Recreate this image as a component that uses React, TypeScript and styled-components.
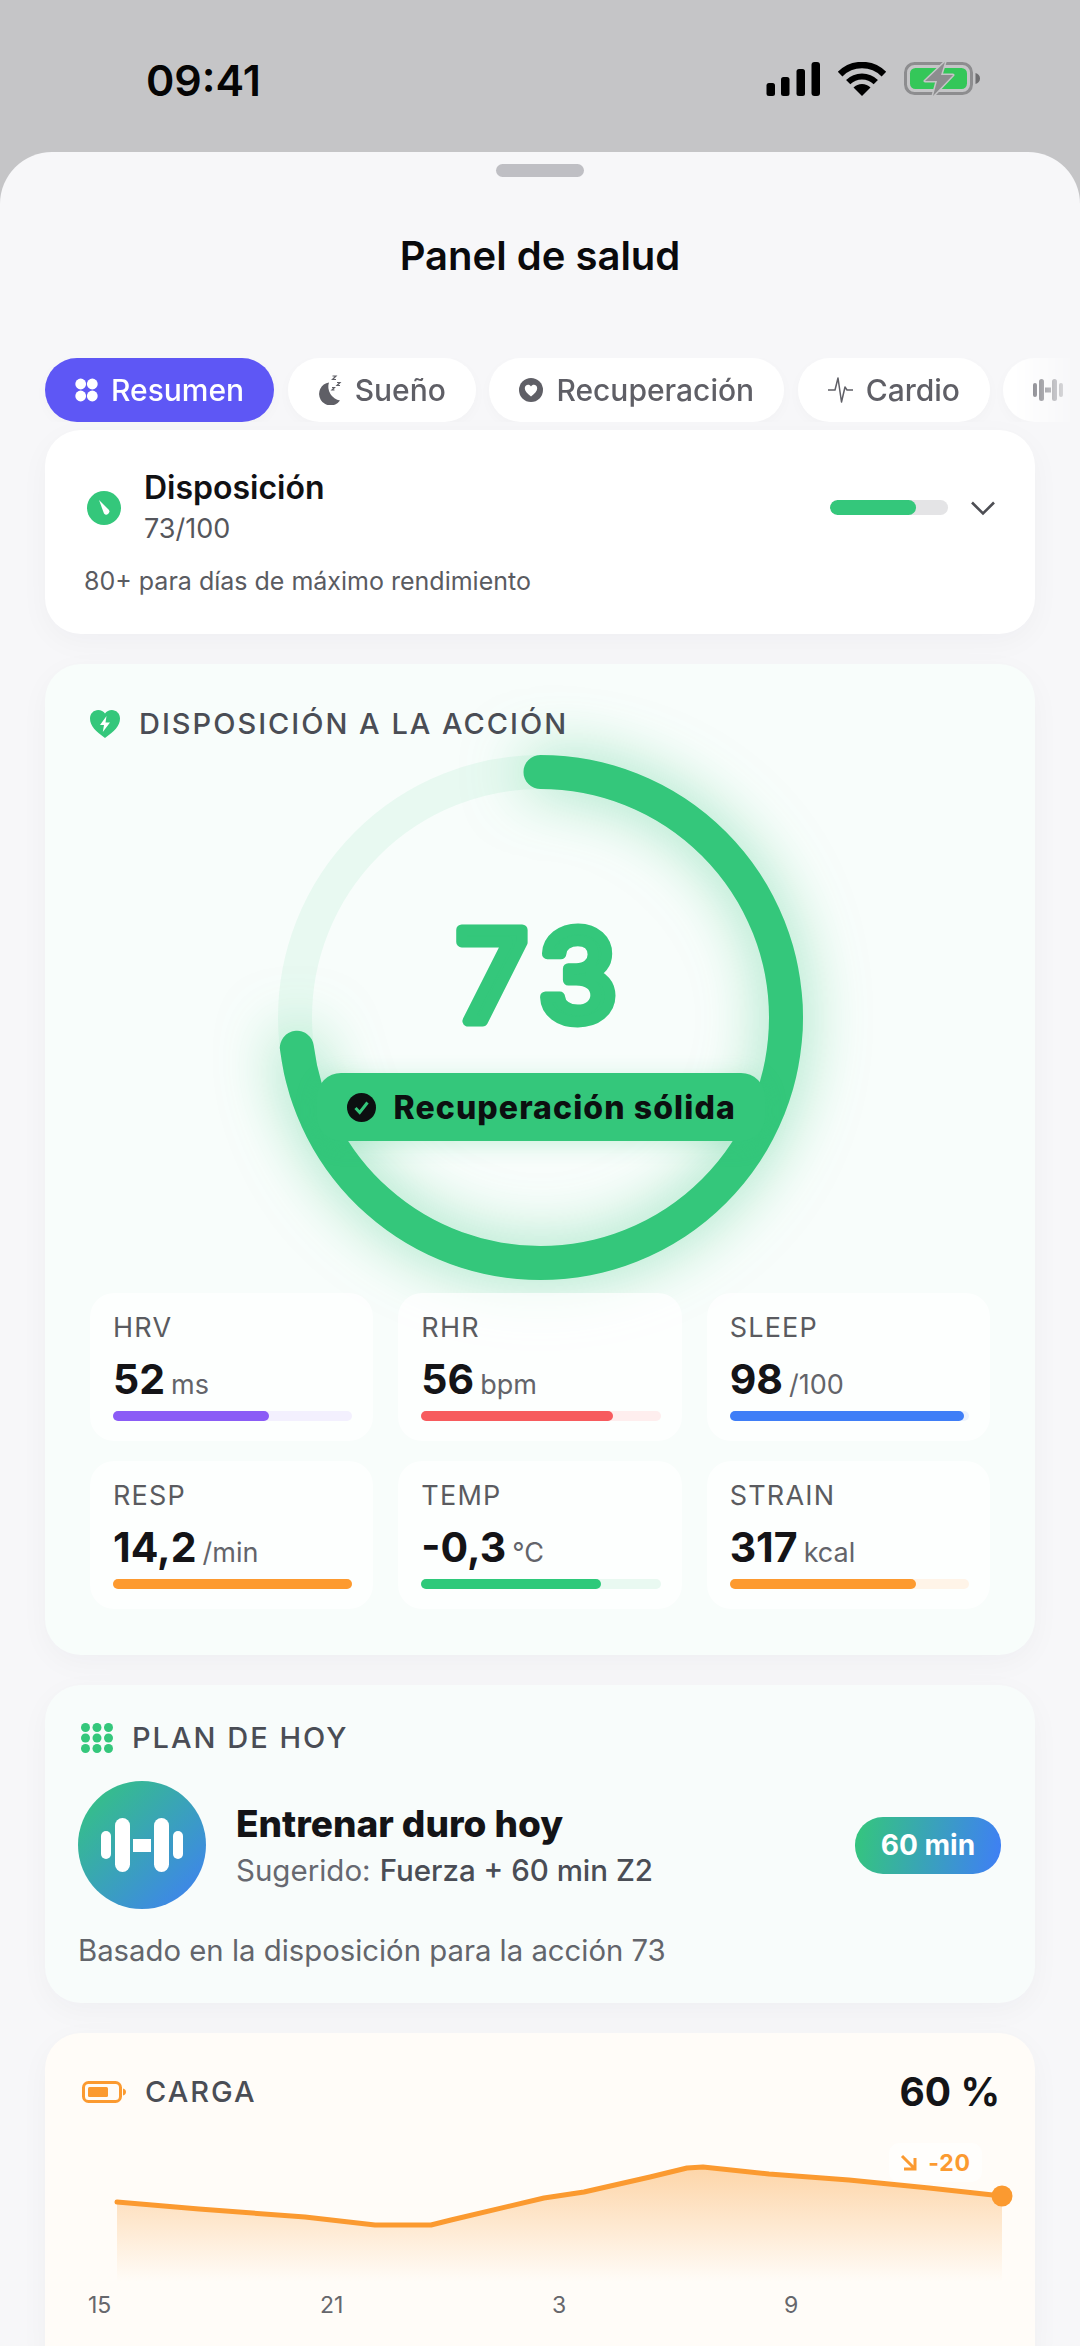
import React from "react";
import styled, { createGlobalStyle } from "styled-components";

const Global = createGlobalStyle`
  html, body { margin: 0; padding: 0; background: #c5c5c7; }
  * { box-sizing: border-box; }
  body { font-family: "Inter", "Liberation Sans", sans-serif; }
`;

const Screen = styled.div`
  width: 1080px;
  height: 2346px;
  overflow: hidden;
  background: #c5c5c7;
`;
const StatusBar = styled.div`
  height: 152px;
  display: flex;
  align-items: flex-start;
  justify-content: space-between;
  padding: 62px 100px 0 146px;
`;
const Time = styled.div`
  font-size: 43px;
  font-weight: 600;
  line-height: 36px;
  color: #050505;
`;
const Sheet = styled.div`
  height: 2194px;
  overflow: hidden;
  background: #f7f7f9;
  border-radius: 52px 52px 0 0;
  padding-top: 12px;
`;
const Grabber = styled.div`
  width: 88px;
  height: 13px;
  border-radius: 7px;
  background: #bfbfc4;
  margin: 0 auto;
`;
const Title = styled.h1`
  margin: 54px 0 0;
  text-align: center;
  font-size: 40px;
  line-height: 50px;
  font-weight: 600;
  color: #0a0a0c;
`;
const Tabs = styled.div`
  margin-top: 77px;
  display: flex;
  gap: 13.5px;
  padding-left: 45px;
  overflow: hidden;
  mask-image: linear-gradient(to right, #000 1010px, transparent 1078px);
`;
const Tab = styled.div<{ $active?: boolean }>`
  flex: none;
  height: 64px;
  padding: 0 30px;
  border-radius: 32px;
  display: flex;
  align-items: center;
  gap: 13px;
  font-size: 30px;
  font-weight: 500;
  background: ${(p) => (p.$active ? "#5e57f5" : "#ffffff")};
  color: ${(p) => (p.$active ? "#ffffff" : "#5f5f66")};
  box-shadow: 0 4px 14px rgba(30, 30, 60, 0.025);
`;
const Stack = styled.div`
  margin-top: 8px;
  padding: 0 45px;
  display: flex;
  flex-direction: column;
  gap: 30px;
`;
const Card = styled.section<{ $bg?: string }>`
  border-radius: 36px;
  background: ${(p) => p.$bg || "#ffffff"};
  box-shadow: 0 8px 30px rgba(30, 30, 60, 0.035);
`;
const ReadyCard = styled(Card)`
  padding: 38px 39px 37px;
`;
const ReadyRow = styled.div`
  display: flex;
  align-items: center;
  justify-content: space-between;
`;
const ReadyLeft = styled.div`
  display: flex;
  align-items: center;
  gap: 23px;
  padding-left: 3px;
`;
const ReadyTitle = styled.div`
  font-size: 32px;
  line-height: 40px;
  font-weight: 600;
  color: #111114;
`;
const ReadySub = styled.div`
  margin-top: 3px;
  font-size: 27px;
  line-height: 36px;
  color: #55565c;
`;
const ReadyRight = styled.div`
  display: flex;
  align-items: center;
  gap: 22px;
`;
const MiniTrack = styled.div`
  width: 118px;
  height: 15px;
  border-radius: 8px;
  background: #e4e4e6;
  overflow: hidden;
`;
const MiniFill = styled.div`
  height: 100%;
  border-radius: 8px;
  background: #34c77b;
`;
const Note = styled.div`
  margin-top: 18px;
  font-size: 25px;
  line-height: 32px;
  color: #5a5b61;
`;
const GaugeCard = styled(Card)`
  padding: 43px 45px 46px;
`;
const Head = styled.div<{ $gap?: number }>`
  display: flex;
  align-items: center;
  gap: ${(p) => p.$gap ?? 19}px;
  position: relative;
  z-index: 1;
`;
const HeadLabel = styled.div`
  font-size: 29px;
  line-height: 34px;
  font-weight: 500;
  letter-spacing: 2px;
  color: #4a4d55;
`;
const Gauge = styled.div`
  position: relative;
  width: 525px;
  height: 525px;
  margin: 14px auto 0;
  display: grid;
`;
const GaugeSvg = styled.svg`
  display: block;
  margin: -60px;
  overflow: visible;
`;
const Arc = styled.circle`
  filter: drop-shadow(0 0 30px rgba(52, 199, 123, 0.55));
`;
const GaugeNumber = styled.text`
  font-family: "Inter", sans-serif;
  font-size: 125px;
  font-weight: 500;
  letter-spacing: 13px;
  fill: #34c77b;
  stroke: #34c77b;
  stroke-width: 11px;
  stroke-linejoin: round;
  stroke-linecap: round;
  text-anchor: middle;
`;
const GaugePill = styled.div`
  position: absolute;
  left: 39px;
  top: 318px;
  width: 448px;
  height: 68px;
  border-radius: 24px;
  background: #34c77b;
  box-shadow: 0 4px 22px rgba(52, 199, 123, 0.22);
  display: flex;
  align-items: center;
  gap: 18px;
  padding-left: 30px;
  font-size: 32px;
  font-weight: 800;
  letter-spacing: 1.1px;
  color: #0c0f10;
`;
const Metrics = styled.div`
  margin-top: 13px;
  display: grid;
  grid-template-columns: repeat(3, 1fr);
  column-gap: 25px;
  row-gap: 20px;
  position: relative;
`;
const Metric = styled.div`
  height: 148px;
  border-radius: 24px;
  background: rgba(255, 255, 255, 0.72);
  padding: 20px 21px 0 23px;
`;
const MetricLabel = styled.div`
  font-size: 27px;
  line-height: 30px;
  letter-spacing: 1.2px;
  color: #5a5b60;
`;
const MetricValue = styled.div`
  margin-top: 14px;
  height: 44px;
  line-height: 44px;
  font-size: 41px;
  font-weight: 700;
  color: #141417;
  display: flex;
  align-items: baseline;
  gap: 6px;
`;
const MetricUnit = styled.span`
  font-size: 27px;
  font-weight: 400;
  color: #63646a;
`;
const BarTrack = styled.div<{ $tint: string }>`
  margin-top: 10px;
  height: 10px;
  border-radius: 5px;
  background: ${(p) => p.$tint};
`;
const BarFill = styled.div<{ $color: string }>`
  height: 100%;
  border-radius: 5px;
  background: ${(p) => p.$color};
`;
const PlanCard = styled(Card)`
  padding: 36px 34px 34px 33px;
`;
const PlanHead = styled(Head)`
  padding-left: 3px;
`;
const PlanRow = styled.div`
  margin-top: 26px;
  display: flex;
  align-items: center;
  gap: 30px;
`;
const Avatar = styled.div`
  width: 128px;
  height: 128px;
  border-radius: 50%;
  flex: none;
  background: linear-gradient(135deg, #34c77b, #3f7ef7);
  display: flex;
  align-items: center;
  justify-content: center;
`;
const PlanText = styled.div`
  flex: 1;
`;
const PlanTitle = styled.div`
  font-size: 37px;
  line-height: 44px;
  font-weight: 800;
  color: #141417;
`;
const PlanSub = styled.div`
  margin-top: 6px;
  font-size: 29.500px;
  line-height: 36px;
  color: #666870;
  display: flex;
  gap: 9px;
`;
const PlanStrong = styled.span`
  font-weight: 500;
  color: #4a4d55;
`;
const DurationBadge = styled.div`
  height: 57px;
  width: 146px;
  border-radius: 28px;
  background: linear-gradient(100deg, #34c77b, #3f7ef7);
  color: #ffffff;
  font-size: 28px;
  font-weight: 700;
  display: flex;
  align-items: center;
  justify-content: center;
`;
const PlanFoot = styled.div`
  margin-top: 24px;
  font-size: 29.300px;
  line-height: 36px;
  color: #63656b;
`;
const LoadCard = styled(Card)`
  padding: 40px 35px 60px 37px;
`;
const LoadHead = styled.div`
  display: flex;
  align-items: center;
  justify-content: space-between;
`;
const LoadValue = styled.div`
  font-size: 39px;
  line-height: 38px;
  font-weight: 700;
  color: #141417;
`;
const Chart = styled.div`
  position: relative;
  margin-top: 19px;
  height: 155px;
`;
const ChartSvg = styled.svg`
  display: block;
  overflow: visible;
`;
const Delta = styled.div`
  position: absolute;
  left: 807px;
  top: 13px;
  width: 93px;
  height: 39px;
  border-radius: 10px;
  background: rgba(255, 255, 255, 0.6);
  display: flex;
  align-items: center;
  justify-content: center;
  gap: 11px;
  font-size: 23px;
  font-weight: 700;
  letter-spacing: 0.8px;
  color: #fb9a30;
`;
const Axis = styled.div`
  margin-top: 5px;
  padding-left: 6px;
  display: grid;
  grid-template-columns: repeat(4, 232px);
  font-size: 23px;
  line-height: 30px;
  color: #66676c;
`;

const StatusIcons = () => (
  <svg width="214" height="36" viewBox="0 0 214 36" aria-hidden="true">
    <rect x="0.5" y="21" width="8.5" height="13" rx="2.5" fill="#000" />
    <rect x="15" y="15" width="8.5" height="19" rx="2.5" fill="#000" />
    <rect x="30.5" y="7" width="8.5" height="27" rx="2.5" fill="#000" />
    <rect x="45.5" y="0" width="8.5" height="34" rx="3" fill="#000" />
    <path d="M74.1 12.1A31 31 0 0 1 117.9 12.1" fill="none" stroke="#000" strokeWidth="6.5" />
    <path d="M82.2 20.2A19.5 19.5 0 0 1 109.8 20.2" fill="none" stroke="#000" strokeWidth="6" />
    <path d="M96 34L87.5 25.5A12 12 0 0 1 104.5 25.5Z" fill="#000" />
    <rect x="139.5" y="1.5" width="66" height="30" rx="9" fill="none" stroke="#8d8d8f" strokeWidth="3" />
    <rect x="144" y="6" width="57" height="21" rx="5.5" fill="#34c759" />
    <path d="M209.5 11c2.6.5 4.5 2.8 4.5 5.5s-1.900 5-4.500 5.500z" fill="#6f6f71" />
    <path
      d="M179 0L159 19H171L167 34L187 13H175Z"
      fill="#8d8d8f"
      stroke="#c5c5c7"
      strokeWidth="3"
      paintOrder="stroke"
      strokeLinejoin="round"
    />
  </svg>
);

const DotsIcon = () => (
  <svg width="23" height="24" viewBox="0 0 23 24" fill="#fff" aria-hidden="true">
    <circle cx="5.700" cy="6" r="5.400" />
    <circle cx="17.300" cy="6" r="5.400" />
    <circle cx="5.700" cy="18" r="5.400" />
    <circle cx="17.300" cy="18" r="5.400" />
  </svg>
);
const MoonIcon = () => (
  <svg width="24" height="30" viewBox="0 0 24 30" aria-hidden="true">
    <path d="M11 7.500A11.500 11.500 0 1 0 22 25.500 14 14 0 0 1 11 7.500Z" fill="#5f5f66" />
    <path d="M14.500 1h3.500l-3.500 3.500h3.500M19 7.500h3l-3 3h3M14 12.500h2.500l-2.500 2.500h2.500" fill="none" stroke="#5f5f66" strokeWidth="1.200" />
  </svg>
);
const HeartBadgeIcon = () => (
  <svg width="24" height="24" viewBox="0 0 24 24" aria-hidden="true">
    <circle cx="12" cy="12" r="12" fill="#5f5f66" />
    <path d="M12 18.500C8 15.500 5.800 13.200 5.800 10.300 5.800 8.200 7.300 6.800 9.100 6.800c1.200 0 2.300.6 2.900 1.700.6-1.100 1.700-1.700 2.900-1.700 1.800 0 3.300 1.400 3.300 3.500 0 2.900-2.200 5.200-6.200 8.200Z" fill="#fff" />
  </svg>
);
const PulseIcon = () => (
  <svg width="25" height="30" viewBox="0 0 25 30" aria-hidden="true">
    <path d="M0 15H7L10 3L13.500 27L17 12L19 15H25" fill="none" stroke="#5f5f66" strokeWidth="1.500" strokeLinejoin="round" />
  </svg>
);
const SmallDumbbell = () => (
  <svg width="30" height="22" viewBox="0 0 30 22" fill="#5f5f66" aria-hidden="true">
    <rect x="0" y="4" width="4" height="14" rx="2" />
    <rect x="6" y="0" width="5" height="22" rx="2.500" />
    <rect x="12" y="8.500" width="6" height="5" />
    <rect x="19" y="0" width="5" height="22" rx="2.500" />
    <rect x="26" y="4" width="4" height="14" rx="2" />
  </svg>
);
const GaugeBadgeIcon = () => (
  <svg width="34" height="34" viewBox="0 0 34 34" aria-hidden="true">
    <circle cx="17" cy="17" r="17" fill="#34c77b" />
    <path d="M12 9L21.500 18.500A3 3 0 0 1 17 22.500Z" fill="#fff" />
  </svg>
);
const Chevron = () => (
  <svg width="26" height="16" viewBox="0 0 26 16" aria-hidden="true">
    <path d="M2 2.500L13 13.500L24 2.500" fill="none" stroke="#4d4e54" strokeWidth="2.600" />
  </svg>
);
const HeartBolt = () => (
  <svg width="30" height="28" viewBox="0 0 30 28" aria-hidden="true">
    <path d="M15 28C6 21.500 0 16 0 8.500 0 3.500 3.800 0 8.200 0c2.800 0 5.300 1.300 6.800 3.500C16.500 1.300 19 0 21.800 0 26.200 0 30 3.500 30 8.500 30 16 24 21.500 15 28Z" fill="#34c77b" />
    <path d="M16.500 6L10 15H14L12.800 22L20 12.500H15.500Z" fill="#fff" />
  </svg>
);
const GridDots = () => (
  <svg width="32" height="30" viewBox="0 0 32 30" fill="#34c77b" aria-hidden="true">
    {[4.500, 16, 27.500].map((x) =>
      [4.500, 15, 25.500].map((y) => <circle key={`${x}-${y}`} cx={x} cy={y} r="4.500" />)
    )}
  </svg>
);
const Dumbbell = () => (
  <svg width="82" height="54" viewBox="0 0 82 54" fill="#fff" aria-hidden="true">
    <rect x="0" y="13" width="10" height="28" rx="5" />
    <rect x="14" y="0" width="15" height="54" rx="7.500" />
    <rect x="32" y="21" width="18" height="13" />
    <rect x="53" y="0" width="15" height="54" rx="7.500" />
    <rect x="72" y="13" width="10" height="28" rx="5" />
  </svg>
);
const BatteryIcon = () => (
  <svg width="44" height="22" viewBox="0 0 44 22" aria-hidden="true">
    <rect x="1.500" y="1.500" width="37" height="19" rx="5" fill="none" stroke="#fb9a30" strokeWidth="3" />
    <rect x="6" y="6" width="20" height="10" rx="1.500" fill="#fb9a30" />
    <path d="M41 7.500c1.800.4 3 1.800 3 3.500s-1.200 3.100-3 3.500z" fill="#fb9a30" />
  </svg>
);
const CheckBadge = () => (
  <svg width="29" height="29" viewBox="0 0 29 29" aria-hidden="true">
    <circle cx="14.500" cy="14.500" r="14.500" fill="#0c0f10" />
    <path d="M8.500 15L12.700 19.500L20.500 9.500" fill="none" stroke="#34c77b" strokeWidth="3" />
  </svg>
);
const DownArrow = () => (
  <svg width="17" height="17" viewBox="0 0 17 17" aria-hidden="true">
    <path d="M2 2L14 14M15 4V15H4" fill="none" stroke="#fb9a30" strokeWidth="3" />
  </svg>
);

type MetricData = {
  label: string;
  value: string;
  unit: string;
  pct: number;
  color: string;
  tint: string;
};
const metrics: MetricData[] = [
  { label: "HRV", value: "52", unit: "ms", pct: 65, color: "#8b5cf6", tint: "#f3f0fe" },
  { label: "RHR", value: "56", unit: "bpm", pct: 80, color: "#f75b5e", tint: "#feeeee" },
  { label: "SLEEP", value: "98", unit: "/100", pct: 98, color: "#3f7ef7", tint: "#edf3fe" },
  { label: "RESP", value: "14,2", unit: "/min", pct: 100, color: "#fd9a2f", tint: "#fff3e6" },
  { label: "TEMP", value: "-0,3", unit: "°C", pct: 75, color: "#2ec97a", tint: "#e9f9f1" },
  { label: "STRAIN", value: "317", unit: "kcal", pct: 78, color: "#fd9a2f", tint: "#fff4e8" },
];

const R = 245.5;
const C = 2 * Math.PI * R;
const linePts =
  "35,72 117,79 223,87 293,95 349,95 369,90 462,68 502,62 568,47 605,38 621,37 687,44 767,50 807,54 847,58 920,66";

export default function App() {
  return (
    <Screen>
      <Global />
      <StatusBar>
        <Time>09:41</Time>
        <StatusIcons />
      </StatusBar>
      <Sheet>
        <Grabber />
        <Title>Panel de salud</Title>
        <Tabs>
          <Tab $active>
            <DotsIcon />
            Resumen
          </Tab>
          <Tab>
            <MoonIcon />
            Sueño
          </Tab>
          <Tab>
            <HeartBadgeIcon />
            Recuperación
          </Tab>
          <Tab>
            <PulseIcon />
            Cardio
          </Tab>
          <Tab>
            <SmallDumbbell />
            Fuerza
          </Tab>
        </Tabs>
        <Stack>
          <ReadyCard>
            <ReadyRow>
              <ReadyLeft>
                <GaugeBadgeIcon />
                <div>
                  <ReadyTitle>Disposición</ReadyTitle>
                  <ReadySub>73/100</ReadySub>
                </div>
              </ReadyLeft>
              <ReadyRight>
                <MiniTrack>
                  <MiniFill style={{ width: "73%" }} />
                </MiniTrack>
                <Chevron />
              </ReadyRight>
            </ReadyRow>
            <Note>80+ para días de máximo rendimiento</Note>
          </ReadyCard>

          <GaugeCard $bg="#f8fdfb">
            <Head>
              <HeartBolt />
              <HeadLabel>DISPOSICIÓN A LA ACCIÓN</HeadLabel>
            </Head>
            <Gauge>
              <GaugeSvg width="645" height="645" viewBox="-60 -60 645 645" aria-hidden="false">
                <circle cx="262.500" cy="262.500" r={R} fill="none" stroke="rgba(52,199,123,0.08)" strokeWidth="34" />
                <Arc
                  cx="262.500"
                  cy="262.500"
                  r={R}
                  fill="none"
                  stroke="#34c77b"
                  strokeWidth="34"
                  strokeLinecap="round"
                  strokeDasharray={`${C * 0.73} ${C}`}
                  transform="rotate(-90 262.500 262.500)"
                />
                <GaugeNumber x="265" y="266">73</GaugeNumber>
              </GaugeSvg>
              <GaugePill>
                <CheckBadge />
                Recuperación sólida
              </GaugePill>
            </Gauge>
            <Metrics>
              {metrics.map((m) => (
                <Metric key={m.label}>
                  <MetricLabel>{m.label}</MetricLabel>
                  <MetricValue>
                    {m.value}
                    <MetricUnit>{m.unit}</MetricUnit>
                  </MetricValue>
                  <BarTrack $tint={m.tint}>
                    <BarFill $color={m.color} style={{ width: `${m.pct}%` }} />
                  </BarTrack>
                </Metric>
              ))}
            </Metrics>
          </GaugeCard>

          <PlanCard $bg="#f8fcfb">
            <PlanHead>
              <GridDots />
              <HeadLabel>PLAN DE HOY</HeadLabel>
            </PlanHead>
            <PlanRow>
              <Avatar>
                <Dumbbell />
              </Avatar>
              <PlanText>
                <PlanTitle>Entrenar duro hoy</PlanTitle>
                <PlanSub>
                  Sugerido:
                  <PlanStrong>Fuerza + 60 min Z2</PlanStrong>
                </PlanSub>
              </PlanText>
              <DurationBadge>60 min</DurationBadge>
            </PlanRow>
            <PlanFoot>Basado en la disposición para la acción 73</PlanFoot>
          </PlanCard>

          <LoadCard $bg="#fffcf8">
            <LoadHead>
              <Head>
                <BatteryIcon />
                <HeadLabel>CARGA</HeadLabel>
              </Head>
              <LoadValue>60 %</LoadValue>
            </LoadHead>
            <Chart>
              <ChartSvg width="930" height="155" viewBox="0 0 930 155" aria-hidden="true">
                <defs>
                  <linearGradient id="loadFill" x1="0" y1="0" x2="0" y2="1">
                    <stop offset="0" stopColor="#fdd5a8" />
                    <stop offset="1" stopColor="#fdd5a8" stopOpacity="0" />
                  </linearGradient>
                </defs>
                <polygon points={`${linePts} 920,152 35,152`} fill="url(#loadFill)" />
                <polyline points={linePts} fill="none" stroke="#fb9a30" strokeWidth="5" strokeLinejoin="round" strokeLinecap="round" />
                <circle cx="920" cy="66" r="10.500" fill="#fb9a30" />
              </ChartSvg>
              <Delta>
                <DownArrow />
                -20
              </Delta>
            </Chart>
            <Axis>
              <span>15</span>
              <span>21</span>
              <span>3</span>
              <span>9</span>
            </Axis>
          </LoadCard>
        </Stack>
      </Sheet>
    </Screen>
  );
}
